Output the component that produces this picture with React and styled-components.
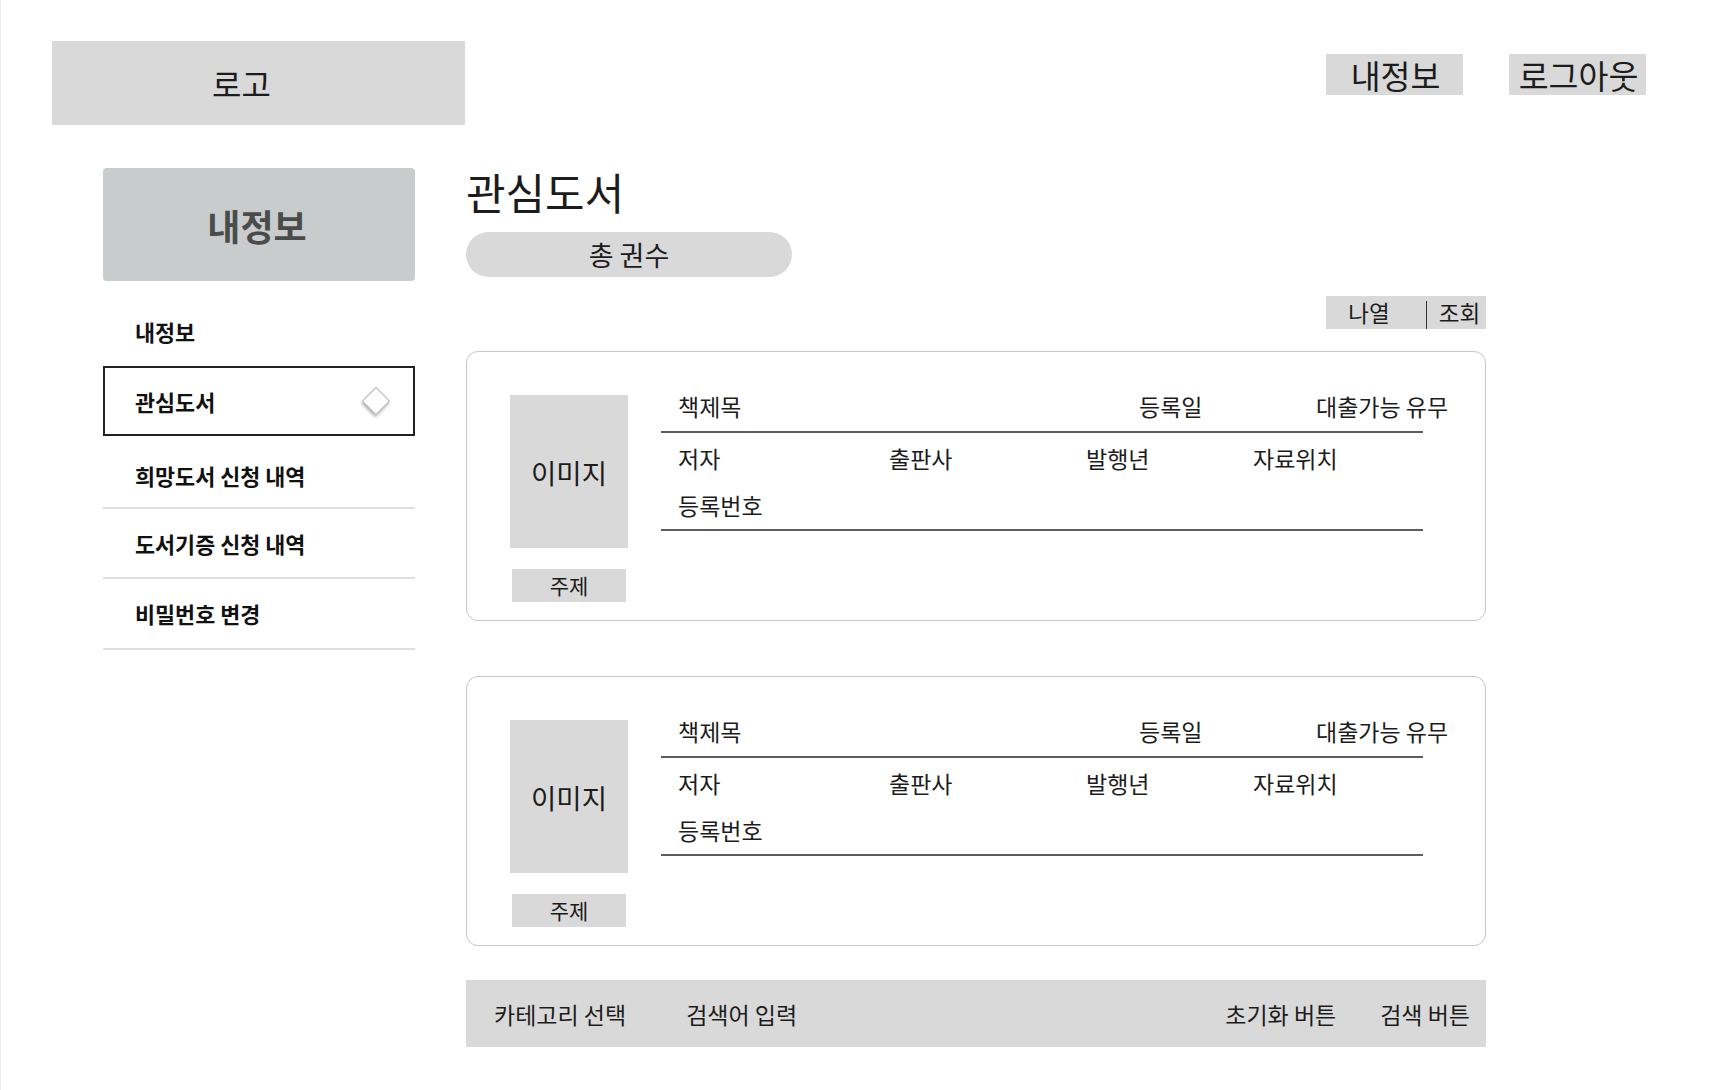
import React from 'react'
import styled, { createGlobalStyle } from 'styled-components'

const GlobalStyle = createGlobalStyle`
  body {
    margin: 0;
    background: #fff;
    font-family: "Noto Sans CJK KR", "Noto Sans", sans-serif;
    color: #1c1c1c;
  }
`

const Page = styled.div`
  min-height: 1090px;
  box-sizing: border-box;
  border-left: 1px solid #ededed;
`

const Header = styled.header`
  display: flex;
  justify-content: space-between;
  align-items: flex-start;
  padding: 41px 89px 0 51px;
`

const Logo = styled.div`
  width: 413px;
  height: 84px;
  background: #d9d9d9;
  display: flex;
  align-items: center;
  padding-left: 160px;
  box-sizing: border-box;
  font-size: 32px;
`

const Nav = styled.nav`
  display: flex;
  gap: 46px;
  margin-top: 13px;
`

const NavButton = styled.div`
  width: 137px;
  height: 41px;
  background: #d9d9d9;
  font-size: 32.5px;
  line-height: 41px;
  text-align: center;
  padding-left: 2px;
  box-sizing: border-box;
  white-space: nowrap;
`

const Body = styled.div`
  display: flex;
  gap: 51px;
  padding-left: 102px;
  margin-top: 43px;
`

const Sidebar = styled.aside`
  width: 312px;
  flex-shrink: 0;
`

const SideTitle = styled.div`
  height: 113px;
  background: #c9cccd;
  border-radius: 4px;
  display: flex;
  align-items: center;
  justify-content: center;
  padding-right: 4px;
  font-size: 36px;
  font-weight: 700;
  color: #4b4b4b;
`

const Menu = styled.ul`
  list-style: none;
  margin: 15px 0 0;
  padding: 0;
`

const MenuItem = styled.li`
  height: ${p => p.$height || 70}px;
  box-sizing: border-box;
  display: flex;
  align-items: center;
  justify-content: space-between;
  padding: ${p => p.$active ? '0 27px 0 30px' : `${p.$offset || 0}px 27px 0 32px`};
  font-size: 21.8px;
  font-weight: 700;
  color: #111;
  border: ${p => p.$active ? '2px solid #222' : 'none'};
  border-bottom: ${p => p.$active ? '2px solid #222' : p.$line ? '2px solid #dedede' : 'none'};
`

const Diamond = styled.span`
  width: 20px;
  height: 20px;
  box-sizing: border-box;
  background: #fff;
  border: 1px solid #b8b8b8;
  transform: rotate(45deg);
  box-shadow: 1px 2px 3px rgba(0, 0, 0, 0.32);
`

const Main = styled.main`
  width: 1020px;
  display: flex;
  flex-direction: column;
`

const Title = styled.h1`
  margin: 0;
  font-size: 43px;
  font-weight: 400;
  line-height: 46px;
  padding-bottom: 2px;
`

const CountPill = styled.div`
  margin-top: 16px;
  width: 326px;
  height: 45px;
  border-radius: 23px;
  background: #d9d9d9;
  display: flex;
  align-items: center;
  justify-content: center;
  font-size: 27px;
`

const ViewToggle = styled.div`
  align-self: flex-end;
  margin-top: 19px;
  height: 33px;
  display: flex;
  background: #d9d9d9;
  font-size: 22.5px;
  line-height: 33px;
`

const ToggleItem = styled.span`
  width: ${p => p.$first ? 100 : 59}px;
  box-sizing: border-box;
  text-align: center;
  padding: ${p => p.$first ? '0 14px 0 0' : '0 0 0 6px'};
`

const ToggleDivider = styled.span`
  width: 1px;
  margin-top: 5px;
  background: #333;
`

const Card = styled.section`
  margin-top: ${p => p.$gap}px;
  height: 270px;
  box-sizing: border-box;
  border: 1px solid #c6c6c6;
  border-radius: 12px;
  padding: 43px 0 0 43px;
  display: flex;
  gap: 33px;
`

const ImageCol = styled.div`
  width: 118px;
  display: flex;
  flex-direction: column;
  align-items: center;
`

const ImageBox = styled.div`
  width: 118px;
  height: 153px;
  background: #d9d9d9;
  display: flex;
  align-items: center;
  justify-content: center;
  font-size: 27.5px;
`

const Subject = styled.div`
  margin-top: 21px;
  width: 114px;
  height: 33px;
  background: #d9d9d9;
  font-size: 21px;
  line-height: 33px;
  text-align: center;
`

const Info = styled.div`
  width: 762px;
  font-size: 23px;
  white-space: nowrap;
`

const InfoHead = styled.div`
  display: grid;
  grid-template-columns: 461px 177px max-content;
  padding: 0 0 14px 17px;
  line-height: 22px;
  border-bottom: 2px solid #5c5c5c;
`

const InfoBody = styled.div`
  padding-top: 2px;
  border-bottom: 2px solid #5c5c5c;
`

const InfoRow = styled.div`
  display: grid;
  grid-template-columns: ${p => p.$cols || '1fr'};
  padding-left: 17px;
  line-height: 47px;
`

const SearchBar = styled.div`
  margin-top: 34px;
  height: 67px;
  background: #d9d9d9;
  display: flex;
  align-items: center;
  padding: 0 16px 0 28px;
  font-size: 23px;
`

const SearchGroup = styled.div`
  display: flex;
  gap: ${p => p.$gap}px;
  margin-left: ${p => p.$right ? 'auto' : '0'};
`

const BookCard = ({ gap }) => (
  <Card $gap={gap}>
    <ImageCol>
      <ImageBox>이미지</ImageBox>
      <Subject>주제</Subject>
    </ImageCol>
    <Info>
      <InfoHead>
        <span>책제목</span>
        <span>등록일</span>
        <span>대출가능 유무</span>
      </InfoHead>
      <InfoBody>
        <InfoRow $cols="211px 197px 167px auto">
          <span>저자</span>
          <span>출판사</span>
          <span>발행년</span>
          <span>자료위치</span>
        </InfoRow>
        <InfoRow>등록번호</InfoRow>
      </InfoBody>
    </Info>
  </Card>
)

const App = () => {
  return (
    <Page>
      <GlobalStyle />
      <Header>
        <Logo>로고</Logo>
        <Nav>
          <NavButton>내정보</NavButton>
          <NavButton>로그아웃</NavButton>
        </Nav>
      </Header>
      <Body>
        <Sidebar>
          <SideTitle>내정보</SideTitle>
          <Menu>
            <MenuItem>내정보</MenuItem>
            <MenuItem $active>
              관심도서
              <Diamond />
            </MenuItem>
            <MenuItem $line $height={73} $offset={8}>희망도서 신청 내역</MenuItem>
            <MenuItem $line>도서기증 신청 내역</MenuItem>
            <MenuItem $line $height={71}>비밀번호 변경</MenuItem>
          </Menu>
        </Sidebar>
        <Main>
          <Title>관심도서</Title>
          <CountPill>총 권수</CountPill>
          <ViewToggle>
            <ToggleItem $first>나열</ToggleItem>
            <ToggleDivider />
            <ToggleItem>조회</ToggleItem>
          </ViewToggle>
          <BookCard gap={22} />
          <BookCard gap={55} />
          <SearchBar>
            <SearchGroup $gap={60}>
              <span>카테고리 선택</span>
              <span>검색어 입력</span>
            </SearchGroup>
            <SearchGroup $gap={44} $right>
              <span>초기화 버튼</span>
              <span>검색 버튼</span>
            </SearchGroup>
          </SearchBar>
        </Main>
      </Body>
    </Page>
  )
}

export default App
